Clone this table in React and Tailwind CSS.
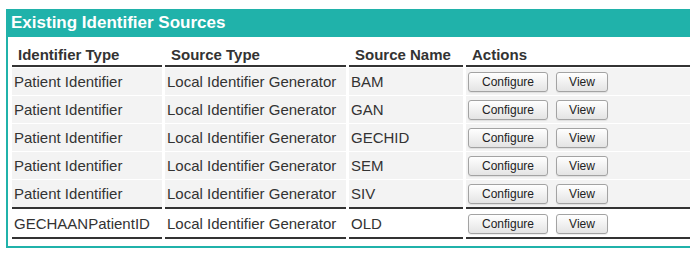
export default function App() {
  const rows = [
    { type: "Patient Identifier", source: "Local Identifier Generator", name: "BAM", shaded: true, rule: false },
    { type: "Patient Identifier", source: "Local Identifier Generator", name: "GAN", shaded: true, rule: false },
    { type: "Patient Identifier", source: "Local Identifier Generator", name: "GECHID", shaded: true, rule: false },
    { type: "Patient Identifier", source: "Local Identifier Generator", name: "SEM", shaded: true, rule: false },
    { type: "Patient Identifier", source: "Local Identifier Generator", name: "SIV", shaded: true, rule: true },
    { type: "GECHAANPatientID", source: "Local Identifier Generator", name: "OLD", shaded: false, rule: true },
  ];

  const btn =
    "h-[20px] rounded-[3px] border border-[#a3a3a3] bg-gradient-to-b from-white to-[#e4e4e4] text-[12px] leading-[18px] text-[#222] shadow-[0_1px_1px_rgba(0,0,0,0.08)]";

  return (
    <div className="w-[690px] h-[256px] overflow-hidden bg-white font-['Liberation_Sans',Arial,sans-serif] text-[#333]">
      <div className="ml-[6px] mt-[9px] w-[740px] border-x-2 border-b-2 border-[#20b2aa] pb-[6px]">
        <div className="h-[28px] bg-[#20b2aa] pl-[3px] text-[17px] font-bold leading-[28px] text-white">
          Existing Identifier Sources
        </div>
        <div className="pt-[7px] pl-[1px]">
          <table className="border-separate border-spacing-x-[3px] border-spacing-y-[1px] text-[15px]">
            <thead>
              <tr>
                <th className="h-[22px] w-[150px] border-b-2 border-[#333] pl-[6px] text-left font-bold leading-[20px]">
                  Identifier Type
                </th>
                <th className="h-[22px] w-[181px] border-b-2 border-[#333] pl-[6px] text-left font-bold leading-[20px]">
                  Source Type
                </th>
                <th className="h-[22px] w-[114px] border-b-2 border-[#333] pl-[6px] text-left font-bold leading-[20px]">
                  Source Name
                </th>
                <th className="h-[22px] w-[260px] border-b-2 border-[#333] pl-[6px] text-left font-bold leading-[20px]">
                  Actions
                </th>
              </tr>
            </thead>
            <tbody>
              {rows.map((r, i) => {
                const cell = [
                  "pl-[2px] align-middle leading-[18px]",
                  r.shaded ? "bg-[#f3f3f3]" : "bg-white",
                  r.rule ? "h-[29px] border-b-2 border-[#333]" : "h-[27px]",
                ].join(" ");
                return (
                  <tr key={i}>
                    <td className={cell}>{r.type}</td>
                    <td className={cell}>{r.source}</td>
                    <td className={cell}>{r.name}</td>
                    <td className={cell}>
                      <div className="flex gap-[8px]">
                        <button className={`${btn} w-[80px]`}>Configure</button>
                        <button className={`${btn} w-[52px]`}>View</button>
                      </div>
                    </td>
                  </tr>
                );
              })}
            </tbody>
          </table>
        </div>
      </div>
    </div>
  );
}
